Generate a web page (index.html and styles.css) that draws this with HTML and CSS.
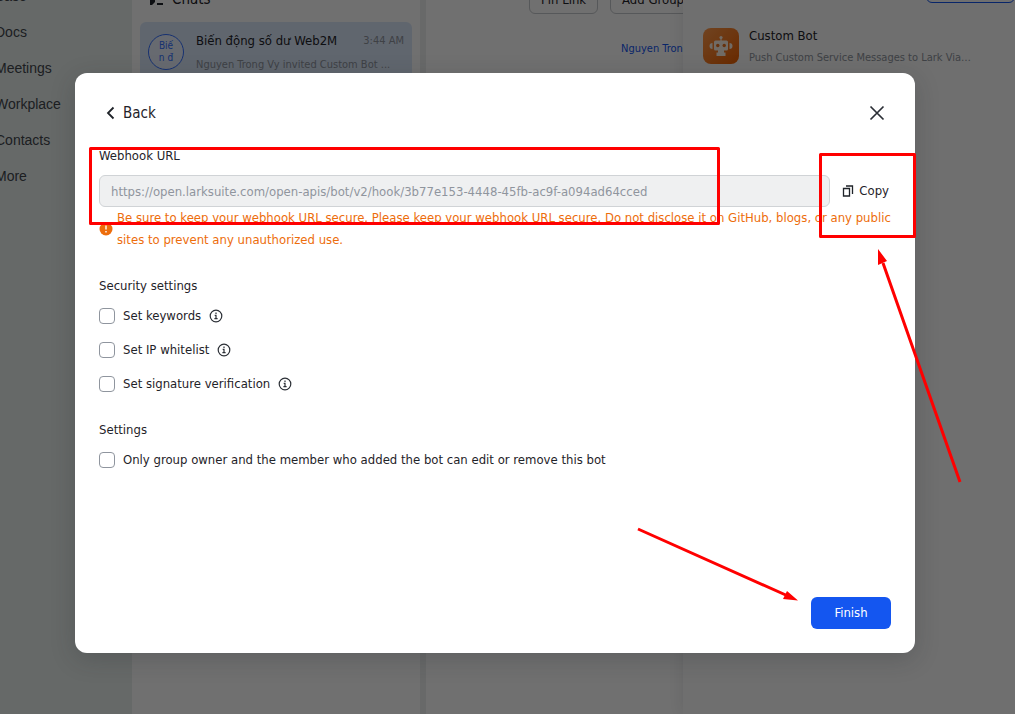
FILE: index.html
```html
<!DOCTYPE html>
<html lang="en">
<head>
<meta charset="utf-8">
<meta name="viewport" content="width=device-width, initial-scale=1">
<title>Custom Bot</title>
<link rel="stylesheet" href="styles.css">
</head>
<body>
<div class="app">
  <nav class="nav">
    <a class="nav-link" href="#">Base</a>
    <a class="nav-link" href="#">Docs</a>
    <a class="nav-link" href="#">Meetings</a>
    <a class="nav-link" href="#">Workplace</a>
    <a class="nav-link" href="#">Contacts</a>
    <a class="nav-link" href="#">More</a>
  </nav>
  <section class="chats">
    <div class="chats-head">
      <svg class="chats-icon" viewBox="0 0 16 16" width="16" height="16" aria-hidden="true"><path d="M1 3h14v2H1zM2 8h5v3l-3 3H2zM9 12h6v2H9z"/></svg>
      <span>Chats</span>
    </div>
    <div class="chat">
      <div class="avatar">Biế<br>n đ</div>
      <div class="chat-body">
        <div class="chat-top"><span class="chat-name">Biến động số dư Web2M</span><time class="chat-time">3:44 AM</time></div>
        <div class="chat-text">Nguyen Trong Vy invited Custom Bot ...</div>
      </div>
    </div>
  </section>
  <main class="conversation">
    <div class="pills">
      <button class="pill" type="button">Pin Link</button>
      <button class="pill" type="button">Add Group Tab</button>
    </div>
    <a class="inviter" href="#">Nguyen Trong Vy</a>
  </main>
  <aside class="drawer">
    <button class="drawer-add" type="button">Add Bot</button>
    <div class="bot">
      <svg class="bot-icon" viewBox="0 0 36 36" width="36" height="36" aria-hidden="true">
        <defs><linearGradient id="bot-bg" x1="0" y1="0" x2="1" y2="1"><stop offset="0" stop-color="#ff9a4b"/><stop offset="1" stop-color="#f06000"/></linearGradient></defs>
        <rect width="36" height="36" rx="8" fill="url(#bot-bg)"/>
        <g fill="#fff4e6"><circle cx="18" cy="9.500" r="1.600"/><path d="M17.400 10h1.200v3h-1.200z"/><rect x="11" y="12.500" width="14" height="10" rx="1.500"/><path d="M9.500 15v6A3 3 0 0 1 9.500 15zM26.500 15v6A3 3 0 0 0 26.500 15zM15 22h6v2.500h1.500V28h-9v-3.500H15z"/></g>
        <g fill="#e8701c"><circle cx="14.800" cy="17.500" r="1.700"/><circle cx="21.200" cy="17.500" r="1.700"/></g>
      </svg>
      <div class="bot-body">
        <div class="bot-name">Custom Bot</div>
        <div class="bot-text">Push Custom Service Messages to Lark Via…</div>
      </div>
    </div>
  </aside>
</div>

<div class="mask">
  <div class="modal" role="dialog" aria-modal="true" aria-label="Custom Bot">
    <header class="modal-head">
      <button class="back" type="button">
        <svg viewBox="0 0 16 16" width="16" height="16" aria-hidden="true"><path d="M10.500 2.500 5 8l5.500 5.500" fill="none" stroke="currentColor" stroke-width="1.800"/></svg>
        Back
      </button>
      <button class="close" type="button" aria-label="Close">
        <svg viewBox="0 0 20 20" width="20" height="20" aria-hidden="true"><path d="m3.500 3.500 13 13m0-13-13 13" fill="none" stroke="currentColor" stroke-width="1.700"/></svg>
      </button>
    </header>

    <label class="heading" for="url">Webhook URL</label>
    <div class="url-row">
      <input class="url" id="url" type="text" readonly value="https://open.larksuite.com/open-apis/bot/v2/hook/3b77e153-4448-45fb-ac9f-a094ad64cced">
      <button class="copy" type="button">
        <svg viewBox="0 0 12 12" width="12" height="12" aria-hidden="true"><path d="M1.500 3.500h6v7.500h-6zM4 1h6.500v8" fill="none" stroke="currentColor" stroke-width="1.300"/></svg>
        Copy
      </button>
    </div>
    <div class="warning">
      <svg class="warning-icon" viewBox="0 0 14 14" width="14" height="14" aria-hidden="true"><circle cx="7" cy="7" r="6.500" fill="#ed6d0c"/><path d="M7 3.500v4M7 9v1.500" stroke="#fff" stroke-width="1.400"/></svg>
      <p class="warning-text">Be sure to keep your webhook URL secure. Please keep your webhook URL secure. Do not disclose it on GitHub, blogs, or any public sites to prevent any unauthorized use.</p>
    </div>

    <fieldset class="group">
      <legend class="heading">Security settings</legend>
      <div class="option"><label class="check"><input type="checkbox">Set keywords</label><svg class="info" viewBox="0 0 14 14" width="14" height="14" aria-hidden="true"><circle cx="7" cy="7" r="5.800"/><path d="M7 3.400v1.500M5.700 6.400H7v3.300M5.400 9.700h3.200"/></svg></div>
      <div class="option"><label class="check"><input type="checkbox">Set IP whitelist</label><svg class="info" viewBox="0 0 14 14" width="14" height="14" aria-hidden="true"><circle cx="7" cy="7" r="5.800"/><path d="M7 3.400v1.500M5.700 6.400H7v3.300M5.400 9.700h3.200"/></svg></div>
      <div class="option"><label class="check"><input type="checkbox">Set signature verification</label><svg class="info" viewBox="0 0 14 14" width="14" height="14" aria-hidden="true"><circle cx="7" cy="7" r="5.800"/><path d="M7 3.400v1.500M5.700 6.400H7v3.300M5.400 9.700h3.200"/></svg></div>
    </fieldset>
    <fieldset class="group">
      <legend class="heading">Settings</legend>
      <div class="option"><label class="check"><input type="checkbox">Only group owner and the member who added the bot can edit or remove this bot</label></div>
    </fieldset>

    <footer class="modal-foot"><button class="finish" type="button">Finish</button></footer>
  </div>
</div>

<svg class="marks" width="1015" height="714" viewBox="0 0 1015 714" aria-hidden="true">
  <g fill="none" stroke="#f00" stroke-width="3" stroke-linejoin="round"><path d="M90.500 148.500h628v75h-628zM820.500 154.500h94v82h-94zM638 529l150 67M960 482l-77-219"/></g>
  <path d="M798 600.500 783 599l4-8zM878 249l9 12-9 4z" fill="#f00"/>
</svg>
</body>
</html>
```
FILE: styles.css
```css
* { box-sizing: border-box; }

body {
  margin: 0;
  min-height: 100vh;
  display: grid;
  overflow: hidden;
  color: #1f2329;
  font: 13px/22px "DejaVu Sans Condensed", "Noto Sans", sans-serif;
}

button, input { font: inherit; color: inherit; }
button { padding: 0; border: 0; background: none; cursor: pointer; }
a { text-decoration: none; }

.app, .mask { grid-area: 1 / 1; min-width: 0; }

.app {
  display: grid;
  grid-template-columns: 132px 288px minmax(0, 263fr) minmax(0, 332fr);
  height: 100vh;
  overflow: hidden;
  background: #fff;
}

.nav {
  display: flex;
  flex-direction: column;
  gap: 14px;
  margin-top: -15px;
  margin-left: -5px;
  background: #e9efed;
  font-family: "Liberation Sans", Arial, sans-serif;
  font-size: 14px;
}
.nav-link { color: #42474d; }

.chats { padding: 0 8px; }
.chats-head {
  display: flex;
  align-items: center;
  gap: 8px;
  margin-top: -12px;
  padding-left: 8px;
  font-size: 15px;
}
.chats-icon { fill: #1f2329; }
.chat {
  display: flex;
  gap: 12px;
  margin-top: 12px;
  padding: 8px;
  border-radius: 6px;
  background: #dbe8fb;
}
.avatar {
  flex: none;
  width: 36px;
  height: 36px;
  margin-top: 4px;
  padding-top: 5px;
  border: 1px solid #3370ff;
  border-radius: 50%;
  background: #eaf1ff;
  color: #3370ff;
  font-size: 10px;
  line-height: 12px;
  text-align: center;
}
.chat-body { flex: 1; min-width: 0; }
.chat-top { display: flex; justify-content: space-between; }
.chat-name { white-space: nowrap; }
.chat-time, .chat-text { color: #8f959e; font-size: 11px; }
.chat-text { padding-top: 2px; white-space: nowrap; }

.conversation {
  border-left: 6px solid #edf0f0;
  overflow: hidden;
}
.pills { display: flex; gap: 12px; margin: -14px 0 0 103px; }
.pill {
  flex: none;
  height: 28px;
  padding: 0 11px;
  border: 1px solid #c5c8cc;
  border-radius: 6px;
}
.inviter {
  display: block;
  margin: 24px 0 0 195px;
  color: #1456f0;
  font-size: 11px;
  white-space: nowrap;
}

.drawer {
  display: flex;
  flex-direction: column;
  padding: 0 20px;
  background: #fcfcfc;
  box-shadow: 0 0 16px rgb(31 35 41 / 12%);
}
.drawer-add {
  align-self: flex-end;
  width: 89px;
  height: 28px;
  margin: -25px -20px 0 0;
  border: 1px solid #1456f0;
  border-radius: 6px;
  color: #1456f0;
}
.bot { display: flex; gap: 10px; margin-top: 22px; }
.bot-icon { flex: none; margin-top: 3px; }
.bot-body { min-width: 0; }
.bot-text { color: #8f959e; font-size: 11px; white-space: nowrap; }

.mask {
  z-index: 1;
  display: grid;
  padding: 73px 100px 61px 75px;
  background: rgb(0 0 0 / 56%);
}

.modal {
  display: flex;
  flex-direction: column;
  min-width: 0;
  padding: 24px;
  border-radius: 12px;
  background: #fff;
  box-shadow: 0 6px 24px rgb(31 35 41 / 22%);
}
.modal-head {
  display: flex;
  justify-content: space-between;
  align-items: center;
  height: 32px;
  padding: 0 4px;
  margin-bottom: 16px;
}
.back { display: flex; align-items: center; gap: 4px; font-size: 15px; }
.close { display: flex; color: #2b2f36; }

.heading { padding: 0; line-height: 22px; }
.url-row { display: flex; gap: 12px; margin-top: 8px; }
.url {
  flex: 1;
  min-width: 0;
  height: 32px;
  padding: 0 11px;
  border: 1px solid #d0d3d6;
  border-radius: 6px;
  background: #eff0f1;
  color: #8f959e;
}
.copy { display: flex; align-items: center; gap: 5px; padding-right: 2px; }

.warning { display: flex; align-items: center; gap: 4px; color: #ed6d0c; }
.warning-icon { flex: none; }
.warning-text { margin: 0; }

.group { min-width: 0; margin: 24px 0 0; padding: 0; border: 0; }
.option { display: flex; align-items: center; gap: 8px; padding-top: 8px; }
.option + .option { padding-top: 12px; }
.check { display: flex; align-items: center; gap: 8px; }
.check input {
  flex: none;
  appearance: none;
  width: 16px;
  height: 16px;
  margin: 0;
  border: 1px solid #8f959e;
  border-radius: 4px;
  background: #fff;
}
.info { fill: none; stroke: #2b2f36; stroke-width: 1.2; }

.modal-foot { display: flex; justify-content: flex-end; margin-top: auto; }
.finish {
  width: 80px;
  height: 32px;
  border-radius: 6px;
  background: #1456f0;
  color: #fff;
}

/* Hand-drawn callouts over the dialog */
.marks { position: absolute; top: 0; left: 0; z-index: 2; pointer-events: none; }
```
